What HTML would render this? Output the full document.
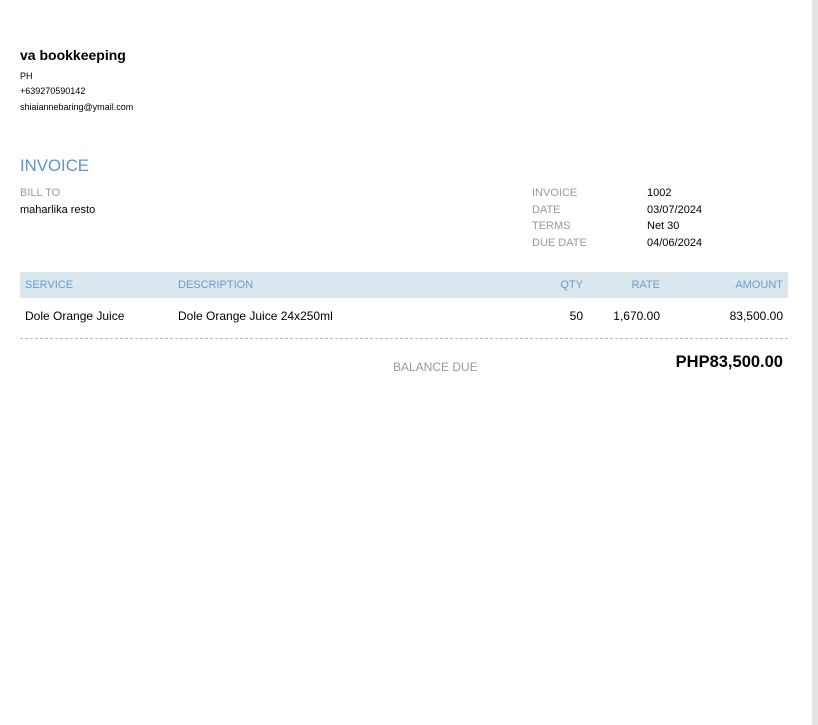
<!DOCTYPE html>
<html><head><meta charset="utf-8"><style>
html,body{margin:0;padding:0;background:#fff;}
body{width:818px;height:725px;position:relative;overflow:hidden;font-family:"Liberation Sans",Arial,sans-serif;color:#000;}
.a{position:absolute;white-space:nowrap;}
.g{color:#9a9a9a;font-size:11px;}
.s{font-size:11px;}
.h{color:#6a9cc6;font-size:11px;}
</style></head><body>
<div class="a" style="left:812px;top:0;width:6px;height:725px;background:#e3e3e3;"></div>
<div class="a" style="left:20px;top:47px;font-size:14px;font-weight:bold;">va bookkeeping</div>
<div class="a" style="left:20px;top:71px;font-size:9px;">PH</div>
<div class="a" style="left:20px;top:86px;font-size:9px;">+639270590142</div>
<div class="a" style="left:20px;top:102px;font-size:9px;">shiaiannebaring@ymail.com</div>
<div class="a" style="left:20px;top:156px;font-size:16.8px;color:#5c96c8;">INVOICE</div>
<div class="a g" style="left:20px;top:187px;">BILL TO</div>
<div class="a s" style="left:20px;top:204px;">maharlika resto</div>
<div class="a g" style="left:532px;top:187px;">INVOICE</div>
<div class="a g" style="left:532px;top:204px;">DATE</div>
<div class="a g" style="left:532px;top:220px;">TERMS</div>
<div class="a g" style="left:532px;top:237px;">DUE DATE</div>
<div class="a s" style="left:647px;top:187px;">1002</div>
<div class="a s" style="left:647px;top:204px;">03/07/2024</div>
<div class="a s" style="left:647px;top:220px;">Net 30</div>
<div class="a s" style="left:647px;top:237px;">04/06/2024</div>
<div class="a" style="left:20px;top:272px;width:768px;height:26px;background:#dbe7ef;"></div>
<div class="a h" style="left:25px;top:279px;">SERVICE</div>
<div class="a h" style="left:178px;top:279px;">DESCRIPTION</div>
<div class="a h" style="right:235px;top:279px;">QTY</div>
<div class="a h" style="right:158px;top:279px;">RATE</div>
<div class="a h" style="right:35px;top:279px;">AMOUNT</div>
<div class="a" style="left:25px;top:309px;font-size:12px;">Dole Orange Juice</div>
<div class="a" style="left:178px;top:309px;font-size:12px;">Dole Orange Juice 24x250ml</div>
<div class="a" style="right:235px;top:309px;font-size:12px;">50</div>
<div class="a" style="right:158px;top:309px;font-size:12px;">1,670.00</div>
<div class="a" style="right:35px;top:309px;font-size:12px;">83,500.00</div>
<div class="a" style="left:20px;top:338px;width:768px;border-top:1px dashed #bbb;"></div>
<div class="a" style="left:393px;top:360px;font-size:12px;color:#999;">BALANCE DUE</div>
<div class="a" style="right:35px;top:353px;font-size:16.5px;font-weight:bold;">PHP83,500.00</div>
</body></html>
